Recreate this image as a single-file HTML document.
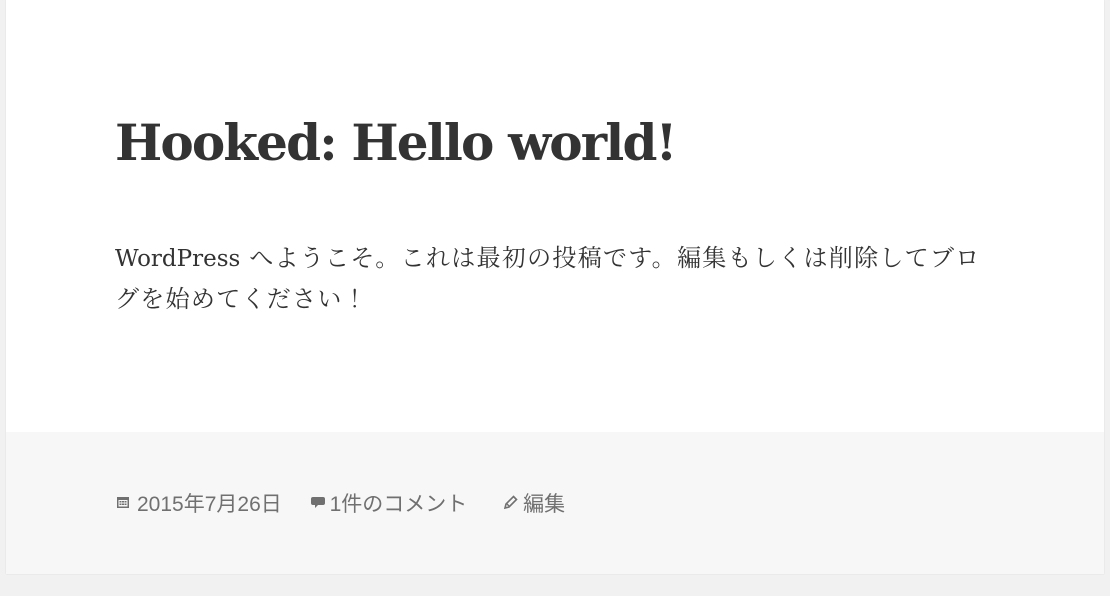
<!DOCTYPE html>
<html><head><meta charset="utf-8"><style>
html,body{margin:0;padding:0;background:#f1f1f1;width:1110px;height:596px;overflow:hidden}
.card{position:absolute;left:6px;top:0;width:1098px;height:574px;background:#fff;box-shadow:0 0 1px rgba(0,0,0,0.15)}
.foot{position:absolute;left:0;top:432px;width:1098px;height:142px;background:#f7f7f7}
h1{position:absolute;left:109px;top:113px;margin:0;font:bold 50px "DejaVu Serif","Noto Serif CJK SC",serif;color:#333;letter-spacing:-1.85px;white-space:nowrap}
.body{position:absolute;left:109px;top:238px;width:885px;font:24px/40px "DejaVu Serif","Noto Serif CJK JP",serif;color:#333;letter-spacing:1.3px}
.body b{font-weight:normal;letter-spacing:0;font-size:23px}
.meta{position:absolute;left:110px;top:488px;font:21px "Liberation Sans","Noto Sans CJK JP",sans-serif;color:#707070;white-space:nowrap}
.meta span{display:inline-block;vertical-align:middle}
.meta svg{vertical-align:middle;margin-right:7px;position:relative;top:-1px}
</style></head><body>
<div class="card">
<h1>Hooked: Hello world!</h1>
<div class="body"><b>WordPress</b> へようこそ。これは最初の投稿です。編集もしくは削除してブログを始めてください！</div>
<div class="foot"></div>
<div class="meta">
<svg width="14" height="14" viewBox="0 0 14 14"><rect x="1" y="2" width="12" height="11" fill="#707070"/><rect x="2.5" y="5" width="9" height="6.5" fill="#f7f7f7"/><g fill="#707070"><rect x="3.5" y="6" width="2" height="1.5"/><rect x="6" y="6" width="2" height="1.5"/><rect x="8.5" y="6" width="2" height="1.5"/><rect x="3.5" y="8.5" width="2" height="1.5"/><rect x="6" y="8.5" width="2" height="1.5"/><rect x="8.5" y="8.5" width="2" height="1.5"/></g></svg><span>2015年7月26日</span>
<svg width="16" height="16" viewBox="0 0 16 16" style="margin-left:22px;margin-right:4px"><path d="M3 3h10a2 2 0 0 1 2 2v4a2 2 0 0 1-2 2H8l-3 3v-3H3a2 2 0 0 1-2-2V5a2 2 0 0 1 2-2z" fill="#707070"/></svg><span>1件のコメント</span>
<svg width="16" height="16" viewBox="0 0 16 16" style="margin-left:30px;margin-right:4px"><path d="M10.5 2.5l3 3-7.5 7.5-4 1 1-4z" fill="none" stroke="#707070" stroke-width="1.6"/><path d="M4 10l2 2" stroke="#707070" stroke-width="1.4"/></svg><span>編集</span>
</div>
</div>
</body></html>
